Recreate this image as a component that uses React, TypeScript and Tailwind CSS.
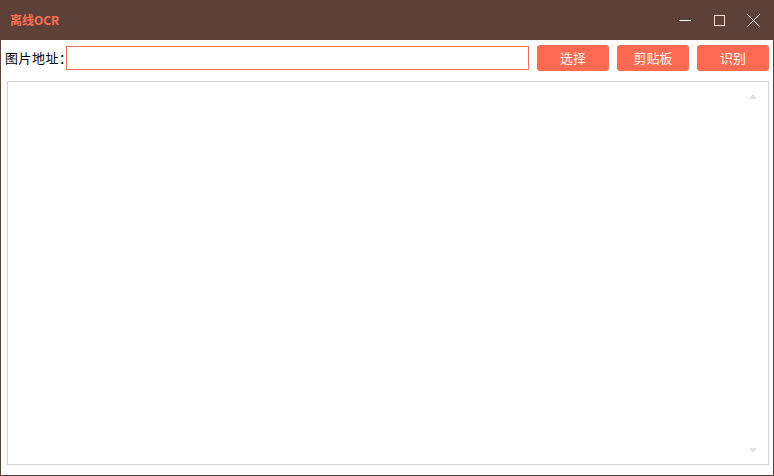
import { useState } from "react";

const font = { fontFamily: '"Microsoft YaHei", "Noto Sans CJK SC", "Noto Sans", sans-serif' };

export default function App() {
  const [path, setPath] = useState("");
  const [text, setText] = useState("");

  return (
    <div className="w-[774px] h-[476px] flex flex-col bg-[#5d4037] overflow-hidden" style={font}>
      {/* title bar */}
      <div className="h-[40px] flex items-center shrink-0">
        <span className="pl-[10px] text-[12px] font-bold text-[#ff7052]">离线OCR</span>
        <div className="ml-auto flex items-center h-full">
          <button className="w-[34px] h-full flex items-center justify-center">
            <svg width="12" height="12" viewBox="0 0 12 12">
              <line x1="0" y1="6.5" x2="12" y2="6.5" stroke="#fff" strokeWidth="1" />
            </svg>
          </button>
          <button className="w-[34px] h-full flex items-center justify-center">
            <svg width="11" height="11" viewBox="0 0 11 11">
              <rect x="0.5" y="0.5" width="10" height="10" fill="none" stroke="#f0dcd6" strokeWidth="1" />
            </svg>
          </button>
          <button className="w-[34px] h-full flex items-center justify-center mr-[4px]">
            <svg width="13" height="13" viewBox="0 0 13 13">
              <path d="M0.5 0.5 L12.5 12.5 M12.5 0.5 L0.5 12.5" stroke="#fff" strokeWidth="1" />
            </svg>
          </button>
        </div>
      </div>

      {/* body */}
      <div className="flex-1 mx-[1px] mb-[1px] bg-white flex flex-col px-[4px] pt-[5px] pb-[10px]">
        <div className="flex items-center h-[25px]">
          <label className="text-[13px] text-black w-[61px] shrink-0 whitespace-nowrap tracking-[0.5px]">图片地址：</label>
          <input
            value={path}
            onChange={(e) => setPath(e.target.value)}
            className="w-[464px] h-[24px] mt-[1px] border border-[#f26d5b] outline-none px-1 text-[13px]"
          />
          <div className="flex gap-[8px] ml-[8px]">
            {["选择", "剪贴板", "识别"].map((label) => (
              <button
                key={label}
                className="w-[72px] h-[26px] rounded-[3px] bg-[#ff6b52] text-[#fff3f0] text-[13px] flex items-center justify-center"
              >
                {label}
              </button>
            ))}
          </div>
        </div>

        <div className="mt-[11px] ml-[2px] flex-1 border border-[#d4d4d4] relative">
          <textarea
            value={text}
            onChange={(e) => setText(e.target.value)}
            className="w-full h-full resize-none outline-none p-1 text-[13px]"
          />
          <svg className="absolute right-[11px] top-[12px]" width="8" height="5" viewBox="0 0 8 5">
            <path d="M0 5 L4 0 L8 5 Z" fill="#e2e2e2" />
          </svg>
          <svg className="absolute right-[11px] bottom-[11px]" width="8" height="5" viewBox="0 0 8 5">
            <path d="M0 0 L4 5 L8 0 Z" fill="#e2e2e2" />
          </svg>
        </div>
      </div>
    </div>
  );
}
